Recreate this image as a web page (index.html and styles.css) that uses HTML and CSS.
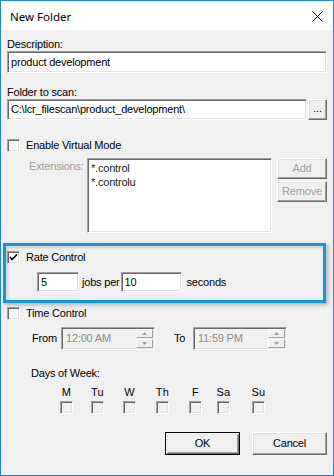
FILE: index.html
```html
<!DOCTYPE html>
<html>
<head>
<meta charset="utf-8">
<link rel="stylesheet" href="styles.css">
</head>
<body>
<div class="window">
  <div class="titlebar">
    <span class="title">New Folder</span>
    <svg class="close" width="11" height="11" viewBox="0 0 11 11"><path d="M0.5 0.5 L10.5 10.5 M10.5 0.5 L0.5 10.5" stroke="#000" stroke-width="1" fill="none"/></svg>
  </div>
  <div class="content">
    <div class="label">Description:</div>
    <div class="field tall">product development</div>

    <div class="label gap13">Folder to scan:</div>
    <div class="browse-row">
      <div class="field grow">C:\lcr_filescan\product_development\</div>
      <div class="btn dots">...</div>
    </div>

    <div class="check-row virt">
      <span class="cb"></span>
      <span>Enable Virtual Mode</span>
    </div>

    <div class="ext">
      <div class="ext-label">Extensions:</div>
      <div class="listbox">
        <div class="item">*.control</div>
        <div class="item">*.controlu</div>
      </div>
      <div class="ext-btns">
        <div class="btn side disabled">Add</div>
        <div class="btn side disabled">Remove</div>
      </div>
    </div>

    <div class="rate">
      <div class="check-row">
        <span class="cb"><svg width="9" height="9" viewBox="0 0 9 9"><path d="M1 4 L3 6.5 L8 1.5" stroke="#000" stroke-width="1.6" fill="none"/></svg></span>
        <span>Rate Control</span>
      </div>
      <div class="rate-row">
        <div class="field num">5</div>
        <span class="jobs">jobs per</span>
        <div class="field num2">10</div>
        <span class="secs">seconds</span>
      </div>
    </div>

    <div class="check-row time">
      <span class="cb"></span>
      <span>Time Control</span>
    </div>

    <div class="time-row">
      <span class="from">From</span>
      <div class="field timebox">
        <span class="tval">12:00 AM</span>
        <div class="spin">
          <div class="spin-btn"><svg width="5" height="3" viewBox="0 0 5 3"><path d="M2.5 0 L5 3 L0 3 Z" fill="#a0a0a0"/></svg></div>
          <div class="spin-btn"><svg width="5" height="3" viewBox="0 0 5 3"><path d="M0 0 L5 0 L2.5 3 Z" fill="#a0a0a0"/></svg></div>
        </div>
      </div>
      <span class="to">To</span>
      <div class="field timebox">
        <span class="tval">11:59 PM</span>
        <div class="spin">
          <div class="spin-btn"><svg width="5" height="3" viewBox="0 0 5 3"><path d="M2.5 0 L5 3 L0 3 Z" fill="#a0a0a0"/></svg></div>
          <div class="spin-btn"><svg width="5" height="3" viewBox="0 0 5 3"><path d="M0 0 L5 0 L2.5 3 Z" fill="#a0a0a0"/></svg></div>
        </div>
      </div>
    </div>

    <div class="label days-label">Days of Week:</div>
    <div class="days">
      <div class="day"><span class="dl">M</span><span class="cb dis"></span></div>
      <div class="day"><span class="dl">Tu</span><span class="cb dis"></span></div>
      <div class="day"><span class="dl">W</span><span class="cb dis"></span></div>
      <div class="day"><span class="dl">Th</span><span class="cb dis"></span></div>
      <div class="day"><span class="dl">F</span><span class="cb dis"></span></div>
      <div class="day"><span class="dl">Sa</span><span class="cb dis"></span></div>
      <div class="day"><span class="dl">Su</span><span class="cb dis"></span></div>
    </div>

    <div class="actions">
      <div class="btn action default">OK</div>
      <div class="btn action">Cancel</div>
    </div>
  </div>
</div>
</body>
</html>
```

FILE: styles.css
```css
html, body {
  margin: 0;
  padding: 0;
  background: #f0f0f0;
}
.window {
  width: 334px;
  height: 476px;
  box-sizing: border-box;
  border: 1px solid #1a8ad6;
  background: #f0f0f0;
  display: flex;
  flex-direction: column;
  font-family: "Liberation Sans", Arial, sans-serif;
  font-size: 11px;
  line-height: 13px;
  color: #000;
  overflow: hidden;
}
.titlebar {
  height: 29px;
  flex: none;
  background: #fff;
  display: flex;
  align-items: center;
  justify-content: space-between;
  padding: 0 10px 0 9px;
}
.title {
  font-family: "Noto Sans", "Liberation Sans", sans-serif;
  font-size: 11.5px;
  color: #000;
  margin-top: 1px;
}
.close {
  display: block;
  margin-top: 1px;
}
.content {
  padding: 8px 6px 0 6px;
  display: flex;
  flex-direction: column;
  letter-spacing: -0.2px;
}
.label {
  height: 13px;
}
.gap13 {
  margin-top: 13px;
}
.field {
  box-sizing: border-box;
  background: #fff;
  border: 1px solid;
  border-color: #a0a0a0 #fff #fff #a0a0a0;
  box-shadow: inset 1px 1px 0 #696969, inset -1px -1px 0 #e3e3e3;
  padding: 0 3px;
  display: flex;
  align-items: center;
  white-space: nowrap;
  overflow: hidden;
}
.tall {
  height: 22px;
}
.browse-row {
  display: flex;
  height: 21px;
}
.grow {
  flex: 1;
}
.btn {
  box-sizing: border-box;
  background: #f0f0f0;
  border: 1px solid;
  border-color: #fff #696969 #696969 #fff;
  box-shadow: inset -1px -1px 0 #a0a0a0, inset 1px 1px 0 #e3e3e3;
  display: flex;
  align-items: center;
  justify-content: center;
  white-space: nowrap;
}
.dots {
  width: 19px;
  margin-left: 1px;
  padding-bottom: 2px;
}
.check-row {
  display: flex;
  align-items: center;
  height: 13px;
  gap: 6px;
}
.virt {
  margin-top: 19px;
}
.cb {
  box-sizing: border-box;
  width: 13px;
  height: 13px;
  flex: none;
  background: #fff;
  border: 1px solid;
  border-color: #a0a0a0 #fff #fff #a0a0a0;
  box-shadow: inset 1px 1px 0 #696969, inset -1px -1px 0 #e3e3e3;
  display: flex;
  align-items: center;
  justify-content: center;
}
.cb svg {
  display: block;
}
.cb.dis {
  background: #f0f0f0;
}
.ext {
  margin-top: 6px;
  display: flex;
  height: 75px;
}
.ext-label {
  color: #a0a0a0;
  width: 58px;
  padding: 2px 0 0 22px;
}
.listbox {
  box-sizing: border-box;
  width: 185px;
  height: 75px;
  background: #fff;
  border: 1px solid;
  border-color: #a0a0a0 #fff #fff #a0a0a0;
  box-shadow: inset 1px 1px 0 #696969, inset -1px -1px 0 #e3e3e3;
  padding: 3px 0 0 3px;
}
.item {
  height: 14px;
  color: #1a1a1a;
}
.ext-btns {
  margin-left: 5px;
  display: flex;
  flex-direction: column;
  gap: 2px;
}
.side {
  width: 50px;
  height: 21px;
}
.disabled {
  color: #a0a0a0;
}
.rate {
  position: relative;
  margin-top: 18px;
}
.rate::after {
  content: "";
  position: absolute;
  left: -4px;
  top: -8px;
  width: 323px;
  height: 60px;
  box-sizing: border-box;
  border: 3px solid #1596d9;
  box-shadow: 2px 2px 4px rgba(0, 0, 0, 0.25), inset 2px 2px 3px rgba(0, 0, 0, 0.12);
  pointer-events: none;
}
.rate-row {
  margin-top: 8px;
  display: flex;
  align-items: center;
  height: 20px;
  padding-left: 30px;
}
.num {
  width: 42px;
  height: 20px;
}
.num2 {
  width: 61px;
  height: 20px;
}
.jobs {
  margin: 0 1px 0 3px;
}
.secs {
  margin-left: 5px;
}
.time {
  margin-top: 15px;
}
.time-row {
  margin-top: 7px;
  display: flex;
  align-items: center;
  height: 23px;
}
.from {
  margin-left: 25px;
  width: 29px;
}
.to {
  margin-left: 19px;
  width: 19px;
}
.timebox {
  width: 94px;
  height: 23px;
  background: #f0f0f0;
  color: #8c8c8c;
  padding: 0 1px 0 4px;
  justify-content: space-between;
}
.spin {
  display: flex;
  flex-direction: column;
  width: 17px;
  height: 19px;
  gap: 1px;
}
.spin-btn {
  box-sizing: border-box;
  flex: 1;
  border: 1px solid;
  border-color: #fff #a0a0a0 #a0a0a0 #fff;
  background: #f0f0f0;
  display: flex;
  align-items: center;
  justify-content: center;
}
.spin-btn svg {
  display: block;
}
.days-label {
  margin-top: 17px;
  padding-left: 24px;
}
.days {
  margin-top: 6px;
  display: grid;
  grid-template-columns: 31px 32px 33px 33px 28px 35px 13px;
  padding-left: 53px;
}
.day {
  width: 13px;
  display: flex;
  flex-direction: column;
  align-items: center;
}
.dl {
  height: 13px;
  margin-bottom: 2px;
  white-space: nowrap;
  letter-spacing: 0.3px;
}
.actions {
  margin-top: 18px;
  display: flex;
  justify-content: flex-end;
  gap: 12px;
}
.action {
  width: 75px;
  height: 23px;
}
.default {
  border: 1px solid #000;
  box-shadow: inset 1px 1px 0 #fff, inset -1px -1px 0 #696969, inset 2px 2px 0 #e3e3e3, inset -2px -2px 0 #a0a0a0;
}
```
